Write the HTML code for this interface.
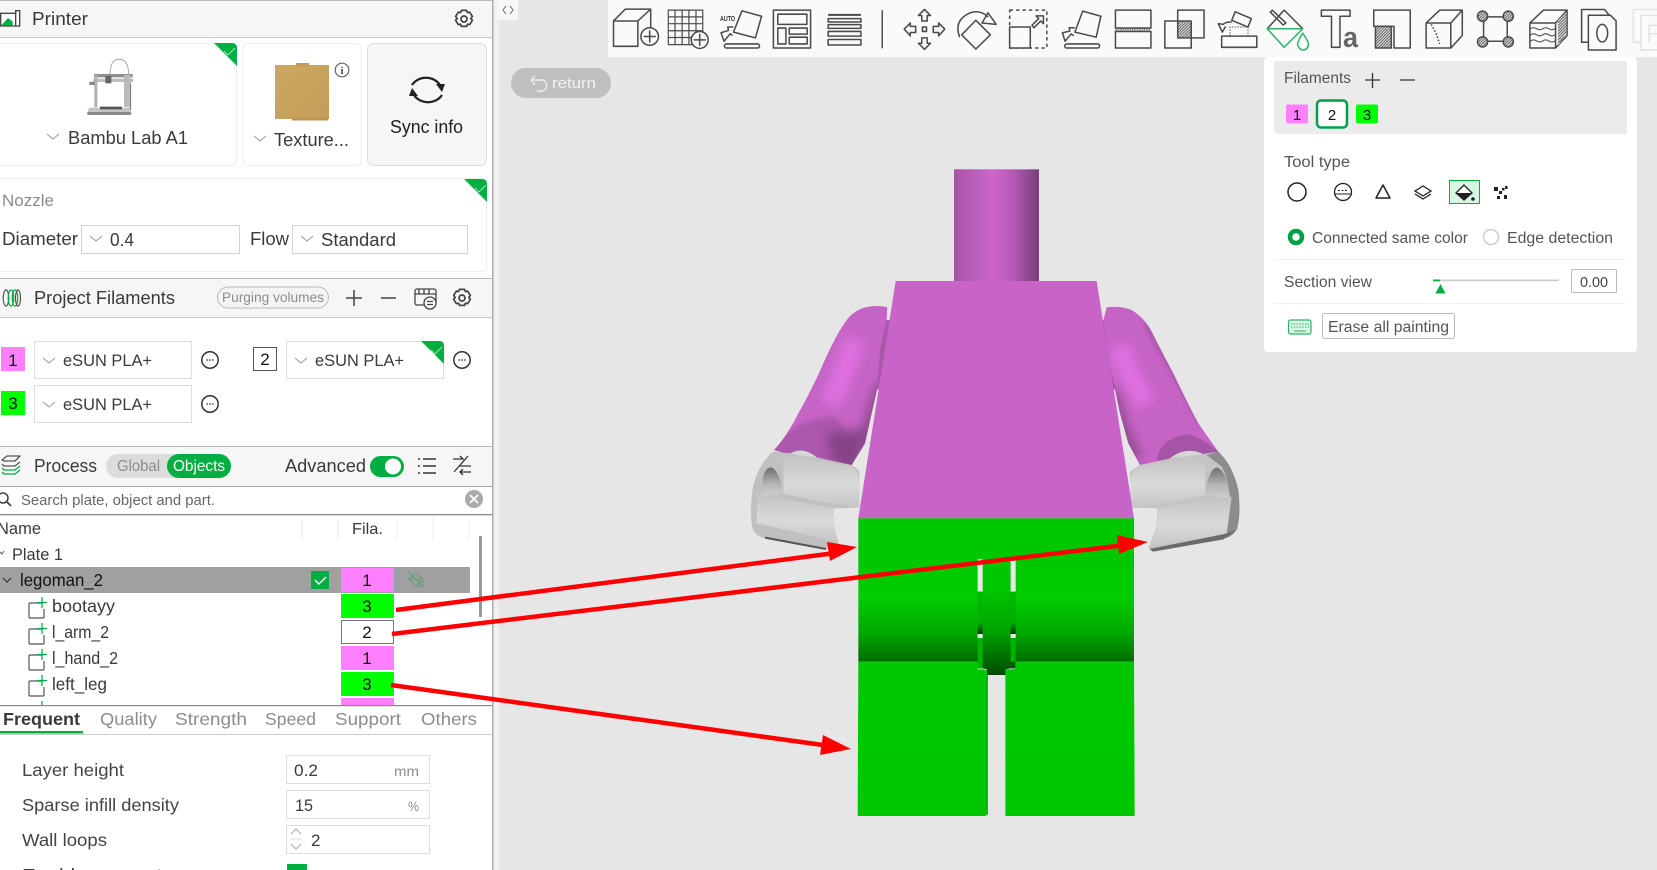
<!DOCTYPE html>
<html lang="en">
<head>
<meta charset="utf-8">
<title>Bambu Studio paint</title>
<style>
html,body{margin:0;padding:0;width:1657px;height:870px;overflow:hidden;background:#e6e6e6}
svg{display:block;position:absolute;left:0;top:0}
text{font-family:"Liberation Sans",sans-serif;font-size:17px;fill:#3a3a3a}
.g{fill:#8c8c8c}
.p{fill:#555;font-size:15.5px}
.c{text-anchor:middle}
.ic{fill:none;stroke:#4a4a4a;stroke-width:4.5;stroke-linejoin:round}
.box{fill:#fff;stroke:#ddd;stroke-width:1}
</style>
</head>
<body>
<svg width="1657" height="870" viewBox="0 0 1657 870" xmlns="http://www.w3.org/2000/svg">
<defs>
<filter id="b14" x="-50%" y="-50%" width="200%" height="200%"><feGaussianBlur stdDeviation="16"/></filter>
<filter id="b6" x="-50%" y="-50%" width="200%" height="200%"><feGaussianBlur stdDeviation="6"/></filter>
<linearGradient id="neck" x1="0" x2="1" y1="0" y2="0">
<stop offset="0" stop-color="#a854a8"/><stop offset=".25" stop-color="#bc5fbc"/><stop offset=".45" stop-color="#cc66cc"/><stop offset=".7" stop-color="#b45ab4"/><stop offset=".85" stop-color="#964c96"/><stop offset="1" stop-color="#783c78"/>
</linearGradient>
<linearGradient id="hand" x1="0" x2="0" y1="0" y2="1">
<stop offset="0" stop-color="#c2c2c2"/><stop offset=".55" stop-color="#dadada"/><stop offset="1" stop-color="#c6c6c6"/>
</linearGradient>
<linearGradient id="hole" x1="0" x2="0" y1="0" y2="1">
<stop offset="0" stop-color="#6e6e6e"/><stop offset=".6" stop-color="#b8b8b8"/><stop offset="1" stop-color="#cfcfcf"/>
</linearGradient>
<linearGradient id="legs" gradientUnits="userSpaceOnUse" x1="0" x2="0" y1="25" y2="455">
<stop offset="0" stop-color="#00c800"/><stop offset=".3" stop-color="#00c800"/><stop offset=".55" stop-color="#00cc00"/><stop offset=".8" stop-color="#00a800"/><stop offset="1" stop-color="#006c00"/>
</linearGradient>
<linearGradient id="wheel" gradientUnits="userSpaceOnUse" x1="0" x2="0" y1="245" y2="495">
<stop offset="0" stop-color="#00c400"/><stop offset=".5" stop-color="#00a000"/><stop offset=".85" stop-color="#006400"/><stop offset="1" stop-color="#004c00"/>
</linearGradient>
<linearGradient id="slit" gradientUnits="userSpaceOnUse" x1="0" x2="0" y1="245" y2="372">
<stop offset="0" stop-color="#00b800"/><stop offset=".72" stop-color="#00b000"/><stop offset="1" stop-color="#003800"/>
</linearGradient>
<linearGradient id="gold" x1="0" x2="1" y1="0" y2="1">
<stop offset="0" stop-color="#cba85f"/><stop offset="1" stop-color="#c49d58"/>
</linearGradient>
<clipPath id="clipArmL"><path d="M102 900Q140 860 175 790Q215 720 250 640Q290 550 320 510Q350 470 405 468Q430 468 442 472L440 510L420 600L412 715L395 790L375 880L335 945L230 925L150 915Z"/></clipPath>
<clipPath id="clipArmR"><path d="M1100 472Q1140 466 1175 480Q1215 505 1235 545Q1265 605 1300 670Q1340 755 1375 820Q1410 870 1435 905L1380 925L1200 945L1165 880L1140 790L1125 718L1110 650L1090 510Z"/></clipPath>
<pattern id="hatch" width="6" height="6" patternUnits="userSpaceOnUse" patternTransform="rotate(45)">
<rect width="6" height="6" fill="#ddd"/><rect width="2.5" height="6" fill="#555"/>
</pattern>
<g id="gear" fill="none" stroke="#444" stroke-width="1.7" stroke-linejoin="round">
<path d="M-2.6-8.6h5.2l.8 2.2 2.2-.5 2.8 4.4-1.6 1.9 1.6 1.9-2.8 4.4-2.2-.5-.8 2.2h-5.2l-.8-2.2-2.2.5-2.8-4.4 1.6-1.9-1.6-1.9 2.8-4.4 2.2.5z"/>
<circle r="3"/>
</g>
<g id="more" fill="none">
<circle r="8.2" stroke="#333" stroke-width="1.5"/>
<path d="M-3.5 0h1.3M-.7 0h1.4M2.2 0h1.3" stroke="#333" stroke-width="1.6"/>
</g>
<g id="part" fill="none">
<path d="M38 5H25a1 1 0 0 0-1 1v13a1 1 0 0 0 1 1h13a1 1 0 0 0 1-1V11" stroke="#555" stroke-width="1.2" transform="translate(5 -2)"/>
<path d="M42 -3v11M37 2.500h10" stroke="#00ae42" stroke-width="1.2"/>
</g>
</defs>

<!-- viewport -->
<rect width="1657" height="870" fill="#e6e6e6"/>
<rect x="493" y="0" width="6" height="870" fill="#f1f1f1"/>
<rect x="497" y="0" width="21" height="20" rx="2" fill="#f7f7f7"/>
<path d="M506 6l-3 4 3 4M510 6l3 4-3 4" fill="none" stroke="#666" stroke-width="1"/>
<rect x="608" y="0" width="1049" height="57" fill="#fafafa"/>

<!-- left panel -->
<rect x="0" y="0" width="492" height="870" fill="#fff"/>
<rect x="492" y="0" width="1.500" height="870" fill="#aaa"/>
<rect width="492" height="37" fill="#f6f6f6"/>
<rect y="37" width="492" height="1" fill="#ccc"/>
<rect y="0" width="492" height="1" fill="#bbb"/>
<g transform="scale(.3333)">
<path d="M2 40h45v-8h12v46H2z" fill="#fff" stroke="#444" stroke-width="4"/><path d="M4 76l20-22 14 10v12z" fill="#00ae42"/><path d="M47 32v46" stroke="#444" stroke-width="4"/>
</g>
<text x="32" y="25" textLength="56" lengthAdjust="spacingAndGlyphs" style="font-size:18px">Printer</text>
<use href="#gear" x="464" y="19"/>

<!-- printer card -->
<rect x="-4" y="43.500" width="240.500" height="122" rx="5" fill="#fff" stroke="#eee"/>
<path d="M214 43h18q5 0 5 5v18z" fill="#00ae42"/><path d="M224 51l4 4 7-7" fill="none" stroke="#9fe3b8" stroke-width="1"/>
<g transform="scale(.3333)">
<path d="M330 225Q330 178 357 178Q386 178 386 225" fill="none" stroke="#999" stroke-width="2.500"/>
<rect x="282" y="222" width="116" height="10" fill="#8f8f8f"/>
<rect x="280" y="236" width="120" height="10" fill="#bdbdbd"/>
<rect x="283" y="225" width="9" height="96" fill="#b0b0b0"/>
<rect x="372" y="225" width="20" height="96" fill="#bcbcbc"/>
<rect x="316" y="228" width="18" height="22" fill="#666"/>
<rect x="268" y="245" width="16" height="10" fill="#888"/>
<path d="M260 343l8-20h122l6 20z" fill="#c4c4c4"/>
<rect x="262" y="336" width="130" height="9" rx="3" fill="#8a8a8a"/>
<rect x="300" y="320" width="66" height="8" fill="#555"/>
<path d="M392 250v80" stroke="#666" stroke-width="2.500"/>
</g>
<path d="M47 134l6 5 6-5" fill="none" stroke="#999" stroke-width="1"/>
<text x="68" y="144" textLength="120" lengthAdjust="spacingAndGlyphs" style="font-size:18px">Bambu Lab A1</text>

<!-- texture card -->
<rect x="243" y="43.500" width="118" height="122" rx="5" fill="#fff" stroke="#eee"/>
<rect x="275" y="65" width="54" height="54" fill="url(#gold)"/><rect x="296" y="63" width="13" height="3" fill="#c29a55"/><rect x="292" y="118" width="36" height="2.500" fill="#bd9550"/>
<circle cx="342" cy="70" r="6.800" fill="#fff" stroke="#666" stroke-width="1.200"/><text x="342" y="74" class="c" style="font-size:10px;font-weight:bold;font-family:'Liberation Serif',serif">i</text>
<path d="M254 136l6 5 6-5" fill="none" stroke="#999" stroke-width="1"/>
<text x="274" y="146" textLength="75" lengthAdjust="spacingAndGlyphs" style="font-size:18px">Texture...</text>

<!-- sync -->
<rect x="367.500" y="43.500" width="119" height="122" rx="6" fill="#f6f6f6" stroke="#ddd"/>
<path d="M412 85a16 14 0 0 1 28 0M442 95a16 14 0 0 1-28 0" fill="none" stroke="#222" stroke-width="2.200"/>
<path d="M436 84l9 0 -3 8zM418 96l-9 0 3-8z" fill="#222"/>
<text x="390" y="133" textLength="73" lengthAdjust="spacingAndGlyphs" style="font-size:18px;fill:#222">Sync info</text>

<!-- nozzle -->
<rect x="-4" y="178.500" width="490.500" height="93" rx="3" fill="#fff" stroke="#eee"/>
<path d="M464 179h18q5 0 5 5v18z" fill="#00ae42"/><path d="M475 188l4 4 7-7" fill="none" stroke="#9fe3b8" stroke-width="1"/>
<text x="2" y="206" class="g" textLength="52" lengthAdjust="spacingAndGlyphs">Nozzle</text>
<text x="2" y="245" textLength="76" lengthAdjust="spacingAndGlyphs" style="font-size:18px">Diameter</text>
<rect x="81.500" y="225.500" width="158" height="28" class="box" style="stroke:#d4d4d4"/>
<path d="M90 236l6 5 6-5" fill="none" stroke="#999" stroke-width="1"/>
<text x="110" y="246" textLength="24" lengthAdjust="spacingAndGlyphs" style="font-size:18px">0.4</text>
<text x="250" y="245" textLength="39" lengthAdjust="spacingAndGlyphs" style="font-size:18px">Flow</text>
<rect x="292.500" y="225.500" width="175" height="28" class="box" style="stroke:#d4d4d4"/>
<path d="M301 236l6 5 6-5" fill="none" stroke="#999" stroke-width="1"/>
<text x="321" y="246" textLength="75" lengthAdjust="spacingAndGlyphs" style="font-size:18px">Standard</text>

<!-- project filaments -->
<rect y="278" width="492" height="40" fill="#f6f6f6"/>
<rect y="278" width="492" height="1" fill="#bbb"/>
<rect y="317" width="492" height="1" fill="#ccc"/>
<g fill="none" stroke="#555" stroke-width="1.200"><ellipse cx="6" cy="298" rx="2.800" ry="8"/><ellipse cx="11" cy="298" rx="2.800" ry="8" stroke="#00ae42"/><ellipse cx="15" cy="298" rx="2.800" ry="8" stroke="#00ae42"/><ellipse cx="18" cy="298" rx="2.500" ry="8"/></g>
<text x="34" y="304" textLength="141" lengthAdjust="spacingAndGlyphs" style="font-size:18px">Project Filaments</text>
<rect x="217.500" y="287" width="111" height="21" rx="10.500" fill="#f4f4f4" stroke="#bbb"/>
<text x="222" y="302" class="g" textLength="102" lengthAdjust="spacingAndGlyphs" style="font-size:13.500px">Purging volumes</text>
<path d="M346 298h16M354 290v16M381 298h15" stroke="#444" stroke-width="1.500" fill="none"/>
<g fill="none" stroke="#444" stroke-width="1.300"><rect x="415" y="289" width="21" height="16" rx="2"/><path d="M415 294h21M419 289v5M424 289v5M429 289v5"/><circle cx="430" cy="303" r="6" fill="#f6f6f6"/><path d="M427 301.500h6M433 304.500h-6"/></g>
<use href="#gear" x="462" y="298"/>

<rect x="1" y="347" width="24" height="24" fill="#ff80ff"/><text x="13" y="366" class="c" style="font-size:17px;fill:#111">1</text>
<rect x="34.500" y="341.500" width="157" height="37" class="box"/>
<path d="M43 358l6 5 6-5" fill="none" stroke="#999" stroke-width="1"/>
<text x="63" y="366" textLength="89" lengthAdjust="spacingAndGlyphs">eSUN PLA+</text>
<use href="#more" x="210" y="360"/>
<rect x="253.500" y="347.500" width="23" height="23" fill="#fff" stroke="#555"/><text x="265" y="365" class="c" style="font-size:17px;fill:#111">2</text>
<rect x="286.500" y="341.500" width="157" height="37" class="box"/>
<path d="M295 358l6 5 6-5" fill="none" stroke="#999" stroke-width="1"/>
<text x="315" y="366" textLength="89" lengthAdjust="spacingAndGlyphs">eSUN PLA+</text>
<path d="M421 341h18q5 0 5 5v18z" fill="#00ae42"/><path d="M431 350l4 4 7-7" fill="none" stroke="#9fe3b8" stroke-width="1"/>
<use href="#more" x="462" y="360"/>
<rect x="1" y="391" width="24" height="24" fill="#00ff00"/><text x="13" y="409" class="c" style="font-size:17px;fill:#111">3</text>
<rect x="34.500" y="385.500" width="157" height="37" class="box"/>
<path d="M43 402l6 5 6-5" fill="none" stroke="#999" stroke-width="1"/>
<text x="63" y="410" textLength="89" lengthAdjust="spacingAndGlyphs">eSUN PLA+</text>
<use href="#more" x="210" y="404"/>

<!-- process -->
<rect y="446" width="492" height="40" fill="#f6f6f6"/>
<rect y="446" width="492" height="1" fill="#bbb"/>
<g fill="none" stroke-width="1.300" stroke-linejoin="round"><path d="M2 460l5-4h13l-5 5H4z" stroke="#555"/><path d="M2 464l2 2h11l5-4" stroke="#555"/><path d="M2 468l2 2h11l5-4M2 472l2 2h11l5-4" stroke="#00ae42"/></g>
<text x="34" y="472" textLength="63" lengthAdjust="spacingAndGlyphs" style="font-size:18px">Process</text>
<rect x="106" y="454" width="125" height="24" rx="12" fill="#dcdcdc"/>
<text x="117" y="471" class="g" textLength="43" lengthAdjust="spacingAndGlyphs" style="font-size:16px">Global</text>
<rect x="167" y="454" width="64" height="24" rx="12" fill="#00ae42"/>
<text x="173" y="471" textLength="52" lengthAdjust="spacingAndGlyphs" style="font-size:16px;fill:#fff">Objects</text>
<text x="285" y="472" textLength="81" lengthAdjust="spacingAndGlyphs" style="font-size:18px">Advanced</text>
<rect x="370" y="456" width="34" height="21" rx="10.500" fill="#00ae42"/><circle cx="393" cy="466.500" r="8" fill="#fff"/>
<g stroke="#333" stroke-width="1.500" fill="none"><path d="M423 459h13M423 466h13M423 473h13"/><path d="M418 459h2M418 466h2M418 473h2"/></g>
<g stroke="#333" stroke-width="1.300" fill="none"><path d="M453 459h10l-3-3M468 456l-14 16M460 466h11M460 472h11M463 475l-3-3 3-3"/></g>

<!-- search -->
<rect y="486" width="492" height="28" fill="#fff"/>
<rect y="486" width="492" height="1" fill="#aaa"/><rect y="514" width="492" height="1.300" fill="#888"/>
<circle cx="3" cy="498" r="5" fill="none" stroke="#444" stroke-width="1.600"/><path d="M7 502l4 4" stroke="#444" stroke-width="1.800"/>
<text x="21" y="505" textLength="194" lengthAdjust="spacingAndGlyphs" style="font-size:14.500px;fill:#666">Search plate, object and part.</text>
<circle cx="474" cy="499" r="9" fill="#aaa"/><path d="M470 495l8 8M478 495l-8 8" stroke="#fff" stroke-width="1.800"/>

<!-- tree -->
<path d="M302 515v25M338 515v25M397 515v25M433 515v25M469 515v25" stroke="#eee"/>
<text x="-3" y="534" textLength="44" lengthAdjust="spacingAndGlyphs">Name</text>
<text x="352" y="534" textLength="31" lengthAdjust="spacingAndGlyphs" style="font-size:16px">Fila.</text>
<path d="M0 552l2 2 2-3" fill="none" stroke="#555"/>
<text x="12" y="560" textLength="51" lengthAdjust="spacingAndGlyphs">Plate 1</text>
<rect x="0" y="567" width="470" height="26" fill="#a0a0a0"/>
<path d="M3 578l4 4 4-4" fill="none" stroke="#333" stroke-width="1.200"/>
<text x="20" y="586" textLength="83" lengthAdjust="spacingAndGlyphs" style="font-size:17.500px;fill:#111">legoman_2</text>
<rect x="311" y="571" width="18" height="18" fill="#00ae42"/><path d="M315 580l4 4 7-7" fill="none" stroke="#fff" stroke-width="1.400"/>
<rect x="341" y="568" width="53" height="24" fill="#ff80ff"/><text x="367" y="586" class="c" style="font-size:17px;fill:#111">1</text>
<g fill="none" stroke="#5f9f78" stroke-width="1"><path d="M409 579l7-6 7 6-7 0zM409 579l7 7 6-5M409 572l14 14"/><circle cx="421" cy="584" r="3"/></g>
<rect x="341" y="594" width="53" height="24" fill="#00ff00"/><text x="367" y="612" class="c" style="font-size:17px;fill:#111">3</text>
<rect x="341.500" y="620.500" width="52" height="23" fill="#fff" stroke="#777"/><text x="367" y="638" class="c" style="font-size:17px;fill:#111">2</text>
<rect x="341" y="646" width="53" height="24" fill="#ff80ff"/><text x="367" y="664" class="c" style="font-size:17px;fill:#111">1</text>
<rect x="341" y="672" width="53" height="24" fill="#00ff00"/><text x="367" y="690" class="c" style="font-size:17px;fill:#111">3</text>
<rect x="341" y="698" width="53" height="8" fill="#ff80ff"/>
<rect x="479" y="536" width="3" height="81" fill="#999"/>
<use href="#part" x="0" y="600"/><use href="#part" x="0" y="626"/><use href="#part" x="0" y="652"/><use href="#part" x="0" y="678"/>
<path d="M42 701v5" stroke="#00ae42" stroke-width="1.200"/>
<text x="52" y="612" textLength="63" lengthAdjust="spacingAndGlyphs" style="font-size:17.500px">bootayy</text>
<text x="52" y="638" textLength="57" lengthAdjust="spacingAndGlyphs" style="font-size:17.500px">l_arm_2</text>
<text x="52" y="664" textLength="66" lengthAdjust="spacingAndGlyphs" style="font-size:17.500px">l_hand_2</text>
<text x="52" y="690" textLength="55" lengthAdjust="spacingAndGlyphs" style="font-size:17.500px">left_leg</text>

<!-- tabs / settings -->
<rect x="0" y="705" width="492" height="165" fill="#fff"/>
<rect y="705" width="492" height="1.200" fill="#888"/>
<rect y="734" width="492" height="1" fill="#ccc"/>
<rect x="0" y="731" width="83" height="2.500" fill="#00ae42"/>
<text x="3" y="725" textLength="77" lengthAdjust="spacingAndGlyphs" style="font-size:17.500px;font-weight:bold">Frequent</text>
<text x="100" y="725" class="g" textLength="57" lengthAdjust="spacingAndGlyphs" style="font-size:17.500px">Quality</text>
<text x="175" y="725" class="g" textLength="72" lengthAdjust="spacingAndGlyphs" style="font-size:17.500px">Strength</text>
<text x="265" y="725" class="g" textLength="51" lengthAdjust="spacingAndGlyphs" style="font-size:17.500px">Speed</text>
<text x="335" y="725" class="g" textLength="66" lengthAdjust="spacingAndGlyphs" style="font-size:17.500px">Support</text>
<text x="421" y="725" class="g" textLength="56" lengthAdjust="spacingAndGlyphs" style="font-size:17.500px">Others</text>

<text x="22" y="776" textLength="102" lengthAdjust="spacingAndGlyphs" style="font-size:17.500px;fill:#444">Layer height</text>
<text x="22" y="811" textLength="157" lengthAdjust="spacingAndGlyphs" style="font-size:17.500px;fill:#444">Sparse infill density</text>
<text x="22" y="846" textLength="85" lengthAdjust="spacingAndGlyphs" style="font-size:17.500px;fill:#444">Wall loops</text>
<text x="22" y="881" textLength="140" lengthAdjust="spacingAndGlyphs" style="font-size:17.500px;fill:#444">Enable support</text>
<rect x="286.500" y="755.500" width="143" height="28" class="box"/>
<text x="294" y="776" textLength="24" lengthAdjust="spacingAndGlyphs">0.2</text>
<text x="394" y="776" class="g" textLength="25" lengthAdjust="spacingAndGlyphs" style="font-size:14px">mm</text>
<rect x="286.500" y="790.500" width="143" height="28" class="box"/>
<text x="295" y="811" textLength="18" lengthAdjust="spacingAndGlyphs">15</text>
<text x="408" y="811" class="g" textLength="11" lengthAdjust="spacingAndGlyphs" style="font-size:14px">%</text>
<rect x="286.500" y="825.500" width="143" height="28" class="box"/>
<path d="M291 834l5-5 5 5M291 844l5 5 5-5" fill="none" stroke="#aaa" stroke-width="1"/>
<path d="M291 839h11" stroke="#ddd"/>
<text x="311" y="846">2</text>
<rect x="287" y="864" width="20" height="8" rx="1" fill="#00ae42"/>

<!-- model -->
<g transform="translate(740 150) scale(.33333)">
<!-- axle strips -->
<path d="M415 510H460L420 718H400Z" fill="#a858a8"/>
<path d="M1085 510H1101L1137 718H1120Z" fill="#9a4e9a"/>
<!-- left arm -->
<g clip-path="url(#clipArmL)">
<rect x="90" y="460" width="370" height="500" fill="#c664c6"/>
<path d="M345 570L305 680L270 760" stroke="#e070e0" stroke-width="60" fill="none" filter="url(#b14)"/>
<path d="M425 700L395 800L355 930" stroke="#8a468a" stroke-width="34" fill="none" filter="url(#b14)"/>
<path d="M80 905Q180 800 280 800L370 880L340 960L230 930Z" fill="#a654a6" filter="url(#b6)" opacity=".8"/>
<path d="M260 850L380 840L340 960L280 940Z" fill="#7e407e" filter="url(#b14)" opacity=".85"/>
</g>
<!-- right arm -->
<g clip-path="url(#clipArmR)">
<rect x="1085" y="460" width="370" height="500" fill="#c664c6"/>
<path d="M1135 590L1175 690L1220 760" stroke="#e070e0" stroke-width="60" fill="none" filter="url(#b14)"/>
<path d="M1115 720L1140 810L1190 930" stroke="#864486" stroke-width="30" fill="none" filter="url(#b14)"/>
<path d="M1250 940Q1250 870 1340 852Q1385 860 1440 910L1380 950Z" fill="#a654a6"/>
<path d="M1215 520L1300 670L1380 820" stroke="#a856a8" stroke-width="14" fill="none" filter="url(#b6)"/>
</g>
<!-- left hand -->
<path d="M100 905Q60 935 40 1005Q28 1070 36 1130Q46 1160 75 1165L255 1198L296 1182L280 1125L282 1075L358 1072V962L335 945L230 922Q190 888 150 910Z" fill="#c0c0c0"/>
<path d="M65 1040Q62 950 95 952Q120 965 128 1030Z" fill="url(#hole)"/>
<path d="M130 915L335 948Q360 962 358 1010V1072L282 1062L130 1032Z" fill="url(#hand)"/>
<path d="M150 912Q190 888 232 924Z" fill="#d6d6d6"/>
<path d="M52 1032L282 1075V1125L294 1176L50 1120Z" fill="url(#hand)"/>
<path d="M75 1163L258 1197" stroke="#555" stroke-width="6" fill="none"/>
<!-- right hand -->
<path d="M1435 905Q1478 945 1495 1020Q1503 1085 1492 1135Q1480 1160 1450 1166L1240 1205L1225 1194L1250 1130L1252 1075L1170 1072V965L1200 945L1290 925Q1335 888 1390 912Z" fill="#c4c4c4"/>
<path d="M1435 905Q1478 945 1495 1020Q1503 1085 1492 1135Q1480 1160 1450 1166L1470 1050Q1465 985 1445 950L1400 915Z" fill="#8c8c8c"/>
<path d="M1395 1035Q1405 955 1432 952Q1462 965 1470 1045Z" fill="url(#hole)"/>
<path d="M1395 920L1200 948Q1165 965 1170 1010V1072L1252 1064L1395 1035Z" fill="url(#hand)"/>
<path d="M1290 925Q1338 888 1388 912Z" fill="#d6d6d6"/>
<path d="M1475 1040L1252 1075V1130L1228 1190L1262 1186L1460 1150Z" fill="url(#hand)"/>
<path d="M1228 1197L1240 1205L1450 1168L1490 1140L1455 1152Z" fill="#6a6a6a"/>
<!-- torso -->
<rect x="642" y="58" width="255" height="336" fill="url(#neck)"/>
<path d="M467 393H1070L1182 1105H355Z" fill="#c864c8"/>
</g>
<g transform="translate(840 510) scale(.33333)">
<rect x="55" y="25" width="827" height="430" fill="url(#legs)"/>
<path d="M413 245H527V475H512L497 478V495H441V478L428 475H413Z" fill="url(#wheel)"/>
<rect x="428" y="148" width="84" height="97" fill="#00c800"/>
<rect x="413" y="148" width="15" height="97" fill="#e8e8e8"/>
<rect x="512" y="148" width="15" height="97" fill="#e8e8e8"/>
<rect x="413" y="245" width="15" height="127" fill="url(#slit)"/>
<rect x="512" y="245" width="15" height="127" fill="url(#slit)"/>
<rect x="413" y="372" width="15" height="12" fill="#e8e8e8"/>
<rect x="512" y="372" width="15" height="12" fill="#e8e8e8"/>
<rect x="413" y="384" width="15" height="91" fill="#00b400"/>
<rect x="512" y="384" width="15" height="71" fill="#00b400"/>
<path d="M55 455H413V478H428L441 480V495H442V900l-4 18H53Z" fill="#00c800"/>
<path d="M527 455H882L884 918H496V478H512L527 476Z" fill="#00c800"/>
<rect x="53" y="738" width="389" height="1.500" fill="#00bc00"/>
<rect x="496" y="738" width="387" height="1.500" fill="#00bc00"/>
<rect x="440" y="495" width="3" height="420" fill="#007000"/>
</g>
<!-- arrows -->
<g fill="#f00" stroke="none">
<path d="M396 610L835 553" stroke="#f00" stroke-width="4.500" fill="none"/>
<path d="M857 547L827 542L830 561Z"/>
<path d="M392 634L1125 545" stroke="#f00" stroke-width="4.500" fill="none"/>
<path d="M1148 542L1117 535L1119 554Z"/>
<path d="M391 685L830 746" stroke="#f00" stroke-width="4.500" fill="none"/>
<path d="M851 749L823 735L820 755Z"/>
</g>

<!-- return -->
<rect x="511" y="68" width="100" height="30" rx="15" fill="#bfbfbf"/>
<path d="M531 80h12a6 6 0 0 1 0 11h-6M531 80l4-4M531 80l4 5" fill="none" stroke="#eee" stroke-width="1.400"/>
<text x="552" y="88" textLength="44" lengthAdjust="spacingAndGlyphs" style="font-size:15px;fill:#f2f2f2">return</text>

<!-- toolbar group 1 -->
<g transform="translate(600 0) scale(.338)" class="ic">
<path d="M40 62H112V137H40ZM40 62L75 27H150V85M112 62L150 27" />
<circle cx="147" cy="108" r="26" fill="#fafafa"/><path d="M147 90v36M129 108h36"/>
<path d="M202 30H304V132H202ZM222 30V132M243 30V132M263 30V132M284 30V132M202 50H304M202 70H304M202 91H304M202 111H304" stroke-width="3.500"/>
<circle cx="295" cy="118" r="25" fill="#fafafa"/><path d="M295 100v36M277 118h36"/>
<path d="M420 32L478 48L460 112L395 95Z"/>
<path d="M395 80H378L380 90L358 97L367 122L385 100L392 105" />
<rect x="368" y="130" width="104" height="12" rx="6"/>
<rect x="513" y="30" width="110" height="112"/><rect x="526" y="42" width="86" height="30"/><rect x="526" y="83" width="24" height="47"/><rect x="560" y="83" width="53" height="18"/><rect x="560" y="110" width="53" height="20"/>
<path d="M675 44H772" stroke-width="6"/>
<rect x="675" y="55" width="97" height="10"/><rect x="675" y="73" width="97" height="11"/><rect x="675" y="93" width="97" height="14"/><rect x="675" y="117" width="97" height="16"/>
<path d="M835 30V143" stroke="#555"/>
<path d="M960 28L978 46H968V62H952V46H942Z"/><path d="M960 146L978 128H968V112H952V128H942Z"/>
<path d="M900 86L918 68V78H934V96H918V106Z"/><path d="M1020 86L1002 68V78H986V96H1002V106Z"/>
<rect x="954" y="80" width="12" height="13"/>
<path d="M1112 60L1155 103L1112 145L1070 103Z"/>
<path d="M1064 110Q1045 60 1095 38Q1125 28 1148 50"/><path d="M1148 38L1172 72L1130 68Z"/>
<rect x="1212" y="30" width="110" height="112" stroke-dasharray="10 9"/>
<rect x="1212" y="80" width="61" height="62" fill="#fafafa"/>
<path d="M1278 75L1298 55L1290 47H1312V70L1304 62L1284 82Z"/>
<path d="M1428 33L1482 48L1468 110L1405 95Z"/>
<path d="M1405 82H1388L1390 92L1368 97L1376 122L1394 100L1402 106"/>
<rect x="1375" y="130" width="103" height="12" rx="6"/>
<rect x="1525" y="30" width="105" height="53"/><rect x="1525" y="93" width="105" height="49"/>
<path d="M1525 88H1630" stroke-dasharray="4 3" stroke-width="3"/>
</g>
<!-- toolbar group 2 -->
<g transform="translate(1127 0) scale(.338)" class="ic">
<rect x="150" y="62" width="40" height="50" fill="url(#hatch)" stroke="none"/>
<rect x="150" y="30" width="78" height="82"/><rect x="112" y="62" width="78" height="80"/>
<rect x="280" y="107" width="104" height="33"/>
<path d="M320 35L368 55L358 80L310 60Z"/>
<path d="M305 107V80H358V107" stroke-dasharray="4 4" stroke-width="3"/>
<path d="M310 65Q290 65 285 72L270 70L282 95L292 78" />
<path d="M415 85L465 30L520 85" />
<path d="M430 30L470 68L462 74L424 36Z"/>
<path d="M415 85H520L465 140Z" stroke="#2fb36a"/>
<path d="M520 98Q503 125 505 133Q510 148 522 148Q537 145 537 130Q535 120 520 98Z" stroke="#2fb36a"/>
<path d="M575 30H660V48H630V140H605V48H575Z"/>
<path d="M730 30H838V142H790V78H730Z"/>
<rect x="735" y="78" width="47" height="64" fill="url(#hatch)"/>
<path d="M885 68H958V142H885ZM885 68L925 30H992L958 68M992 30V105L958 142"/>
<path d="M900 72L915 100L925 130" stroke-dasharray="5 5"/>
<rect x="1055" y="50" width="70" height="72"/>
<circle cx="1052" cy="48" r="15" fill="url(#hatch)"/><circle cx="1128" cy="48" r="15" fill="url(#hatch)"/><circle cx="1052" cy="124" r="15" fill="url(#hatch)"/><circle cx="1128" cy="124" r="15" fill="url(#hatch)"/>
<path d="M1192 68H1268V142H1192ZM1192 68L1232 30H1302L1268 68M1302 30V105L1268 142"/>
<path d="M1275 60L1300 35V100L1275 135Z" fill="url(#hatch)" stroke="none"/>
<path d="M1194 85q9-6 18 0t18 0 18 0 18 0M1194 103q9-6 18 0t18 0 18 0 18 0M1194 121q9-6 18 0t18 0 18 0 18 0" stroke-width="3"/>
<path d="M1365 125H1345V28H1413L1426 44"/>
<path d="M1365 45H1430L1447 62V148H1365Z" fill="#fafafa"/>
<ellipse cx="1406" cy="98" rx="16" ry="26"/>
<path d="M1520 125H1498V28H1600V40M1520 45H1640V148H1520Z" stroke="#e2e2e2"/>
<path d="M1545 125V75H1575V100H1545" stroke="#e2e2e2"/>
</g>
<text x="1343" y="47" textLength="15" lengthAdjust="spacingAndGlyphs" style="font-size:29px;font-weight:bold;fill:#666">a</text>
<text x="720" y="21" textLength="15" lengthAdjust="spacingAndGlyphs" style="font-size:7px;font-weight:bold;fill:#333">AUTO</text>

<!-- paint panel -->
<rect x="1264" y="57" width="373" height="295" rx="4" fill="#fff"/>
<path d="M1274 61H1627V134H1278q-4 0-4-4Z" fill="#ebebeb"/>
<text x="1284" y="83" class="p" textLength="67" lengthAdjust="spacingAndGlyphs">Filaments</text>
<path d="M1365 80h15M1372.500 73v15M1400 80h15" stroke="#333" stroke-width="1.300" fill="none"/>
<rect x="1286" y="104.500" width="22" height="19" rx="2" fill="#ff80ff"/><text x="1297" y="120" class="c" style="font-size:15px;fill:#111">1</text>
<rect x="1317" y="100.500" width="30" height="27" rx="4" fill="#fff" stroke="#00a04a" stroke-width="2.500"/><text x="1332" y="120" class="c" style="font-size:15px;fill:#111">2</text>
<rect x="1356" y="104.500" width="22" height="19" rx="2" fill="#00ff00"/><text x="1367" y="120" class="c" style="font-size:15px;fill:#111">3</text>
<text x="1284" y="167" class="p" textLength="66" lengthAdjust="spacingAndGlyphs">Tool type</text>
<circle cx="1297" cy="192" r="9" fill="none" stroke="#222" stroke-width="1.500"/>
<circle cx="1343" cy="192" r="8.500" fill="none" stroke="#222" stroke-width="1.300"/><path d="M1335 194h16" stroke="#222" stroke-width="1"/><path d="M1338 190.500h10" stroke="#222" stroke-width="1" stroke-dasharray="2 1.500"/>
<path d="M1383 185l7 13h-14z" fill="none" stroke="#222" stroke-width="1.500" stroke-linejoin="round"/>
<path d="M1423 186l-8 5 8 5 8-5zM1415 194l8 5 8-5" fill="none" stroke="#222" stroke-width="1.300"/>
<rect x="1449.500" y="180.500" width="30" height="23" fill="#d9f5e3" stroke="#00ae42"/>
<path d="M1464 185l-8 8 8 7 8-7z" fill="#fff" stroke="#222" stroke-width="1.300"/><path d="M1456 193h16l-8 7z" fill="#222"/><circle cx="1473" cy="199" r="1.800" fill="#222"/>
<path d="M1494 187h4v4h-4zM1502 188h2.500v2.500h-2.500zM1505 186h2.500v3h-2.500zM1499 191h3v3h-3zM1497 196h3v3h-3zM1504 195h3v4h-3z" fill="#222"/>
<circle cx="1296" cy="237" r="6" fill="#fff" stroke="#00a04a" stroke-width="4.500"/>
<text x="1312" y="243" class="p" textLength="156" lengthAdjust="spacingAndGlyphs">Connected same color</text>
<circle cx="1491" cy="237" r="7.500" fill="#fff" stroke="#c4c4c4" stroke-width="1.200"/>
<text x="1507" y="243" class="p" textLength="106" lengthAdjust="spacingAndGlyphs">Edge detection</text>
<rect x="1274" y="259" width="353" height="1" fill="#f0f0f0"/>
<text x="1284" y="287" class="p" textLength="88" lengthAdjust="spacingAndGlyphs">Section view</text>
<rect x="1433" y="279.500" width="126" height="1.800" fill="#ccc"/><rect x="1433" y="279.500" width="7" height="1.800" fill="#00ae42"/>
<path d="M1440.500 284l5 9.500h-10z" fill="#00ae42"/>
<rect x="1571.500" y="269.500" width="45" height="23" rx="1" fill="#fff" stroke="#bbb"/>
<text x="1580" y="287" textLength="28" lengthAdjust="spacingAndGlyphs" style="font-size:15px;fill:#444">0.00</text>
<rect x="1274" y="303" width="353" height="1" fill="#f0f0f0"/>
<rect x="1288.500" y="320" width="22.500" height="14" rx="2" fill="#d9f5e3" stroke="#2fb36a" stroke-width="1.200"/>
<path d="M1291 324h18M1291 327h18" stroke="#2fb36a" stroke-dasharray="1.500 1.300"/><path d="M1294 331h12" stroke="#2fb36a"/>
<rect x="1322.500" y="313.500" width="132" height="25" rx="2" fill="#fff" stroke="#bbb"/>
<text x="1328" y="332" class="p" textLength="121" lengthAdjust="spacingAndGlyphs">Erase all painting</text>
</svg>
</body>
</html>
